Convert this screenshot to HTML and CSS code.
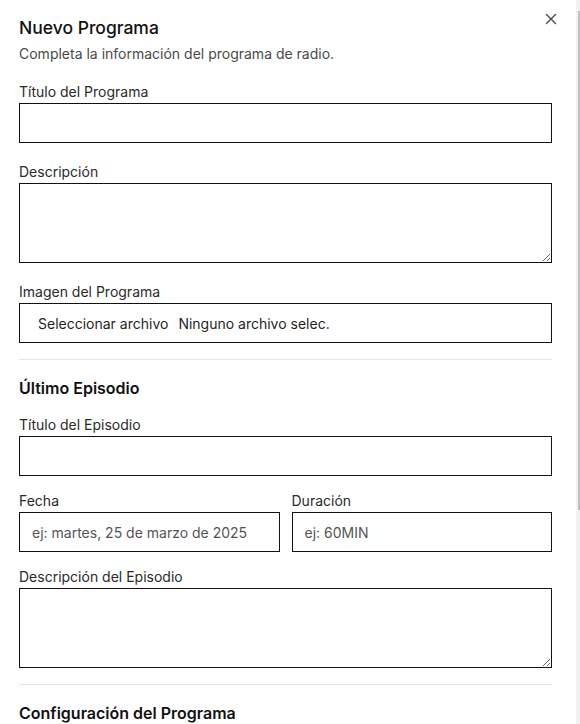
FILE: index.html
```html
<!DOCTYPE html>
<html lang="es">
<head>
<meta charset="utf-8">
<title>Nuevo Programa</title>
<link rel="stylesheet" href="styles.css">
</head>
<body>
<div class="dialog" role="dialog" aria-labelledby="dlg-title">
  <button class="close" type="button" aria-label="Cerrar">
    <svg width="12" height="12" viewBox="0 0 12 12" aria-hidden="true"><path d="M1.5 1.5 L10.5 10.5 M10.5 1.5 L1.5 10.5" stroke="#4a4a4a" stroke-width="1.4" stroke-linecap="round" fill="none"/></svg>
  </button>
  <header class="head">
    <h2 id="dlg-title" class="title">Nuevo Programa</h2>
    <p class="subtitle">Completa la información del programa de radio.</p>
  </header>

  <form class="form">
    <div class="section sec-main">
      <div class="field">
        <label class="label" for="titulo">Título del Programa</label>
        <input class="input" id="titulo" type="text">
      </div>
      <div class="field">
        <label class="label" for="desc">Descripción</label>
        <textarea class="input area" id="desc"></textarea>
      </div>
      <div class="field">
        <label class="label" for="img">Imagen del Programa</label>
        <div class="input file" id="img">
          <span class="file-btn">Seleccionar archivo</span>
          <span class="file-name">Ninguno archivo selec.</span>
        </div>
      </div>
    </div>

    <hr class="sep">

    <div class="section sec-ep">
      <h3 class="sec-title">Último Episodio</h3>
      <div class="field">
        <label class="label" for="ep-titulo">Título del Episodio</label>
        <input class="input" id="ep-titulo" type="text">
      </div>
      <div class="row">
        <div class="field">
          <label class="label" for="fecha">Fecha</label>
          <input class="input" id="fecha" type="text" placeholder="ej: martes, 25 de marzo de 2025">
        </div>
        <div class="field">
          <label class="label" for="dur">Duración</label>
          <input class="input" id="dur" type="text" placeholder="ej: 60MIN">
        </div>
      </div>
      <div class="field">
        <label class="label" for="ep-desc">Descripción del Episodio</label>
        <textarea class="input area" id="ep-desc"></textarea>
      </div>
    </div>

    <hr class="sep">

    <div class="section sec-ep">
      <h3 class="sec-title">Configuración del Programa</h3>
    </div>
  </form>
</div>
<div class="scrollbar" aria-hidden="true">
  <div class="thumb"></div>
</div>
</body>
</html>
```

FILE: styles.css
```css
html, body {
  margin: 0;
  padding: 0;
  overflow: hidden;
  background: #ffffff;
}

body {
  display: flex;
  height: 724px;
  font-family: Inter, "Liberation Sans", sans-serif;
  color: #1a1a1a;
}

.dialog {
  position: relative;
  box-sizing: border-box;
  width: 576px;
  height: 724px;
  flex: none;
  overflow: hidden;
  padding: 14px 24px 0 19px;
  background: #fff;
}

.scrollbar {
  flex: 1;
  height: 724px;
  background: #f1f1f1;
  display: flex;
  flex-direction: column;
  align-items: flex-end;
}

.thumb {
  margin-top: 11px;
  width: 2px;
  height: 499px;
  background: #c1c1c1;
}

.close {
  position: absolute;
  top: 13px;
  left: 545px;
  width: 12px;
  height: 12px;
  padding: 0;
  border: 0;
  background: transparent;
  display: flex;
  align-items: center;
  justify-content: center;
  cursor: pointer;
}

.head {
  display: flex;
  flex-direction: column;
  gap: 2px;
}

.title {
  margin: 0;
  font-size: 17.5px;
  line-height: 28px;
  font-weight: 500;
  color: #111;
}

.subtitle {
  margin: 0;
  font-size: 14px;
  line-height: 20px;
  color: #4a4a4a;
}

.form {
  display: flex;
  flex-direction: column;
  margin-top: 18px;
}

.section {
  display: flex;
  flex-direction: column;
}
.sec-main { gap: 19px; }
.sec-ep { gap: 15px; }

.field {
  display: flex;
  flex-direction: column;
  gap: 1px;
  min-width: 0;
}

.label {
  font-size: 14px;
  line-height: 20px;
  color: #2a2a2a;
}

.input {
  box-sizing: border-box;
  width: 100%;
  height: 40px;
  margin: 0;
  padding: 0 12px;
  border: 1px solid #111;
  border-radius: 0;
  background: #fff;
  font-family: Inter, "Liberation Sans", sans-serif;
  font-size: 14px;
  color: #1a1a1a;
  outline: none;
}
.input::placeholder {
  color: #555;
}

.area {
  height: 80px;
  padding: 8px 12px;
  resize: vertical;
  display: block;
}

.file {
  display: flex;
  align-items: center;
  gap: 10px;
  padding: 0 18px;
  color: #1f1f1f;
}

.row {
  display: grid;
  grid-template-columns: 1fr 1fr;
  gap: 12px;
}

.sep {
  margin: 16px 0;
  border: 0;
  border-top: 1px solid #e4e4e7;
  height: 0;
}

.sec-title {
  margin: 0;
  font-size: 16px;
  line-height: 24px;
  font-weight: 600;
  color: #111;
}
```
